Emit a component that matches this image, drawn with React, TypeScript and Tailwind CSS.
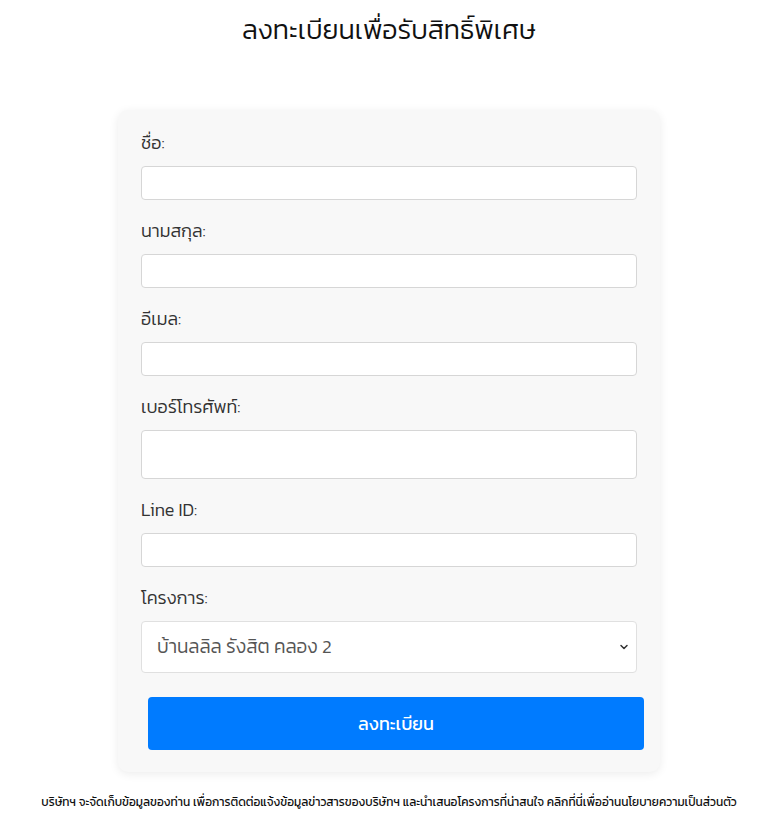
import { ChevronDown } from "lucide-react";

const fields = [
  { label: "ชื่อ:", height: "h-[34px]" },
  { label: "นามสกุล:", height: "h-[34px]" },
  { label: "อีเมล:", height: "h-[34px]" },
  { label: "เบอร์โทรศัพท์:", height: "h-[49px]" },
  { label: "Line ID:", height: "h-[34px]" },
];

export default function App() {
  return (
    <div className="min-h-[825px] bg-white pl-[10px] font-['Kanit','Prompt','Noto_Sans_Thai','Noto_Sans',sans-serif] text-[#212529]">
      <h1 className="pt-[12px] text-center text-[27px] leading-[36px] font-light text-[#111]">
        ลงทะเบียนเพื่อรับสิทธิ์พิเศษ
      </h1>

      <div className="mx-auto mt-[62px] w-[542px] rounded-[10px] bg-[#f8f8f8] px-[23px] pt-[21px] pb-[22px] shadow-[0_2px_10px_rgba(0,0,0,0.08)]">
        <form onSubmit={(e) => e.preventDefault()}>
          {fields.map((f) => (
            <div key={f.label} className="mb-[19px]">
              <label className="mb-[11px] block text-[18px] leading-[24px] font-light text-[#333]">
                {f.label}
              </label>
              <input
                type="text"
                className={`block w-full rounded-[4px] border border-[#d6d6d6] bg-white px-3 ${f.height} focus:outline-none`}
              />
            </div>
          ))}

          <div>
            <label className="mb-[11px] block text-[18px] leading-[24px] font-light text-[#333]">
              โครงการ:
            </label>
            <div className="relative">
              <select className="block h-[52px] w-full appearance-none rounded-[4px] border border-[#e0e0e0] bg-white pl-[15px] text-[19px] font-light text-[#555] focus:outline-none">
                <option>บ้านลลิล รังสิต คลอง 2</option>
              </select>
              <ChevronDown
                className="pointer-events-none absolute right-[7px] top-1/2 h-[12px] w-[12px] -translate-y-1/2 text-[#333]"
                strokeWidth={3}
              />
            </div>
          </div>

          <button
            type="submit"
            className="mt-[24px] ml-[7px] block h-[53px] w-[496px] rounded-[4px] bg-[#007bff] text-[18px] text-white"
          >
            ลงทะเบียน
          </button>
        </form>
      </div>

      <p className="mt-[22px] text-center text-[11.9px] leading-[16px] text-[#111]">
        บริษัทฯ จะจัดเก็บข้อมูลของท่าน เพื่อการติดต่อแจ้งข้อมูลข่าวสารของบริษัทฯ และนำเสนอโครงการที่น่าสนใจ คลิกที่นี่เพื่ออ่านนโยบายความเป็นส่วนตัว
      </p>
    </div>
  );
}
